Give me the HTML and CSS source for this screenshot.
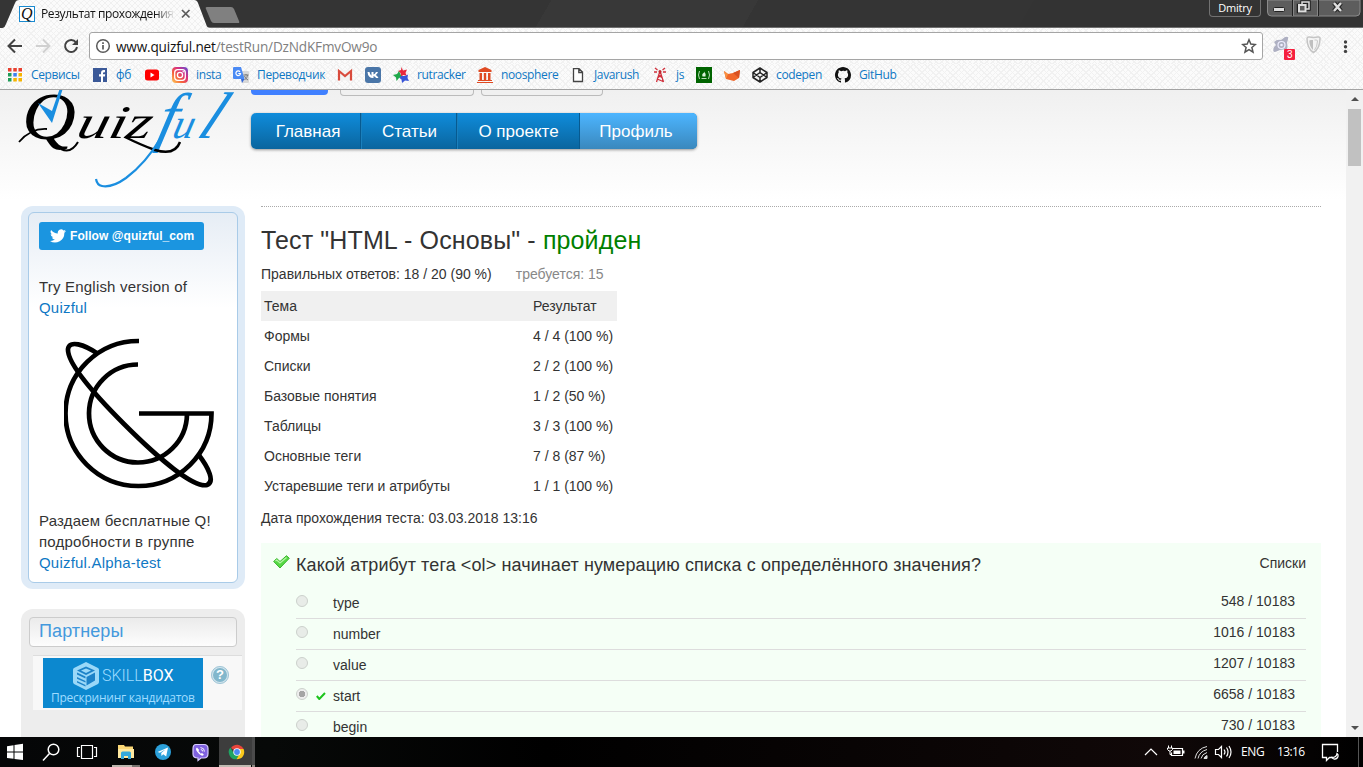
FILE: index.html
```html
<!DOCTYPE html>
<html lang="ru">
<head>
<meta charset="utf-8">
<title>Результат прохождения</title>
<link rel="stylesheet" href="styles.css">
</head>
<body>
<div class="screen">
  <header class="tabstrip">
    <svg class="tabs" width="560" height="28" viewBox="0 0 560 28">
      <defs>
        <pattern id="weave" width="6" height="6" patternUnits="userSpaceOnUse"><rect width="6" height="6" fill="#fbfbfb"/><path d="M0 0l6 6M6 0L0 6" stroke="#f0f0f0" stroke-width="1"/></pattern>
      </defs>
      <path d="M0 0h18L5 26q-1 2-5 2z" fill="#353535"/>
      <path d="M3 28Q5 27 6 24L15 3Q16 0 19 0H194Q197 0 198 3L206 24Q207 28 210 28z" fill="url(#weave)"/>
      <path d="M206 9q-1-2 1-2h24q2 0 3 2l5 12q1 2-1 2h-24q-2 0-3-2z" fill="#808080"/>
      <rect x="19.500" y="6.500" width="15" height="15" fill="#fff" stroke="#1a8ad0"/>
      <text x="21" y="19" class="fav-q">Q</text>
      <path d="M182 10l7.500 7.500M189.500 10L182 17.500" stroke="#5a5a5a" stroke-width="1.700"/>
    </svg>
    <span class="tab-title">Результат прохождения</span>
    <span class="user">Dmitry</span>
    <svg class="winbtns" width="94" height="17" viewBox="0 0 94 17">
      <path d="M.5 0V12q0 4 4 4H89q4 0 4-4V0z" fill="#5d5d5d" stroke="#8b8b8b"/>
      <path d="M25.500 0V16M51.500 0V16" stroke="#222"/><path d="M26.500 0V16M50.500 0V16" stroke="#858585"/>
      <rect x="6.500" y="7.500" width="11" height="4" rx="1" fill="#ddd" stroke="#222"/>
      <path d="M35 2h7v7h-7zM31.500 5.500h6v6h-6z" fill="#5d5d5d" stroke="#1e1e1e" stroke-width="3.500"/><path d="M35 2h7v7h-7z" fill="none" stroke="#ddd" stroke-width="1.500"/><path d="M32 5h6.500v6.500H32z" fill="#5d5d5d" stroke="#ddd" stroke-width="2"/>
      <path d="M67 3l7 8M74 3l-7 8" stroke="#222" stroke-width="4.500"/><path d="M67 3l7 8M74 3l-7 8" stroke="#ddd" stroke-width="2.500"/>
    </svg>
  </header>

  <div class="toolbar">
    <svg class="navicons" width="82" height="28" viewBox="0 0 82 28" fill="none">
      <path d="M22 14H9M15 7.500L8.500 14l6.500 6.500" stroke="#424242" stroke-width="2"/>
      <path d="M36 14h13M43 7.500l6.500 6.500L43 20.500" stroke="#d0d0d0" stroke-width="2"/>
      <path d="M76 10.500A6 6 0 1 0 77 15" stroke="#424242" stroke-width="2"/><path d="M78 7v6h-6z" fill="#424242"/>
    </svg>
    <div class="omnibox">
      <svg width="16" height="16" viewBox="0 0 16 16"><circle cx="8" cy="8" r="6.300" fill="none" stroke="#5a5a5a" stroke-width="1.500"/><path d="M8 7v4.500M8 4.300V6" stroke="#5a5a5a" stroke-width="1.700"/></svg>
      <span class="url">www.quizful.net<i>/testRun/DzNdKFmvOw9o</i></span>
      <svg class="star" width="16" height="16" viewBox="0 0 16 16"><path d="M8 1.800l1.800 4.300 4.600.4-3.500 3 1.100 4.600-4-2.500-4 2.500 1.100-4.600-3.500-3 4.600-.4z" fill="none" stroke="#555" stroke-width="1.500"/></svg>
    </div>
    <svg class="exts" width="92" height="28" viewBox="0 0 92 28">
      <path d="M3 10q3-3 7-2l4-3q4-1 3 2l-1 4q1 4 0 6l-7 1-5 2q-3 0-1-5l2-2z" fill="#aeb0c2"/><circle cx="10.500" cy="13" r="3.500" fill="none" stroke="#eef" stroke-width="1.200"/><circle cx="10.500" cy="13" r="1.300" fill="#eef"/>
      <rect x="13" y="17" width="11" height="11" rx="1" fill="#f5203f"/><text x="16" y="26" class="badge">3</text>
      <path d="M36 6.500Q36 4 42.500 5.500q7-1.500 6.500 1 0 10-6.500 14-6.500-4-6.500-14z" fill="#f4f4f4" stroke="#c4c4c4" stroke-width="1.500"/><path d="M42 8q-4-.5-3.700 1 .3 6 3.700 9z" fill="#bfbfbf"/><path d="M43.500 8q3-.5 3 1-.3 6-3 9" fill="none" stroke="#c8c8c8"/>
      <circle cx="74.500" cy="10" r="1.700" fill="#424242"/><circle cx="74.500" cy="14.700" r="1.700" fill="#424242"/><circle cx="74.500" cy="19.400" r="1.700" fill="#424242"/>
    </svg>
  </div>

  <nav class="bookmarks">
    <a class="bm b1"><svg viewBox="0 0 16 16"><g fill="#e8402f"><path d="M1 1h3.500v3.500H1zM6.300 1h3.500v3.500H6.300zM11.500 1H15v3.500h-3.500z"/></g><path d="M1 6h3.500v3.500H1z" fill="#1f9c58"/><path d="M6.300 6h3.500v3.500H6.300z" fill="#3c80f0"/><path d="M11.500 6H15v3.500h-3.500zM11.500 11H15v3.500h-3.500zM6.300 11h3.500v3.500H6.300z" fill="#f5b400"/><path d="M1 11h3.500v3.500H1z" fill="#1f9c58"/></svg><span>Сервисы</span></a>
    <a class="bm b2"><svg viewBox="0 0 16 16"><path d="M1 1h14v14H1z" fill="#3b5998"/><path d="M9 15V9.500H7V7.300h2V6q0-3 2.800-3H13v2.200h-1q-1 0-1 1v1.100h2.200l-.3 2.200H11V15z" fill="#fff"/></svg><span>фб</span></a>
    <a class="bm b3"><svg viewBox="0 0 16 16"><rect x="1" y="2.500" width="14" height="11" rx="2.500" fill="#f00"/><path d="M6.500 5.500l4 2.500-4 2.500z" fill="#fff"/></svg></a>
    <a class="bm b4"><svg viewBox="0 0 16 16"><defs><linearGradient id="ig" x1="0" y1="1" x2="1" y2="0"><stop offset="0" stop-color="#fc5"/><stop offset=".35" stop-color="#f5603d"/><stop offset=".65" stop-color="#d62e80"/><stop offset="1" stop-color="#5851db"/></linearGradient></defs><rect width="16" height="16" rx="4" fill="url(#ig)"/><rect x="2.700" y="2.700" width="10.600" height="10.600" rx="3" fill="none" stroke="#fff" stroke-width="1.300"/><circle cx="8" cy="8" r="2.600" fill="none" stroke="#fff" stroke-width="1.300"/><circle cx="11.200" cy="4.800" r=".8" fill="#fff"/></svg><span>insta</span></a>
    <a class="bm b5"><svg viewBox="0 0 16 16"><path d="M7 4h8q1 0 1 1v10q0 1-1 1H9z" fill="#d8d8d8"/><path d="M1 0h7l3.500 12H1q-1 0-1-1V1q0-1 1-1z" fill="#4a8af4"/><path d="M8 12h3.500L9 16z" fill="#3367d6"/><path d="M7 4.800a2.300 2.300 0 1 0 .5 1.700H5.300" fill="none" stroke="#fff" stroke-width="1.200"/><path d="M10.500 8h5M13 7v1M11.500 13q3-2 3-5M11.500 9q1 3 3.500 4" fill="none" stroke="#777"/></svg><span>Переводчик</span></a>
    <a class="bm b6"><svg viewBox="0 0 16 16"><path d="M1 3h14v10.500H1z" fill="#f3f3f3"/><path d="M2 13.500V4l6 5 6-5v9.500" fill="none" stroke="#d94b3d" stroke-width="2.200"/></svg></a>
    <a class="bm b7"><svg viewBox="0 0 16 16"><rect width="16" height="16" rx="3" fill="#4a76a8"/><path d="M2.500 5h2q.5 3 2 3.800V5h2v2.500Q10 7 11 5h2q-.4 1.700-2.200 3.100Q12.500 9.200 13.500 11h-2.300Q10 9.400 8.500 9v2H8Q3 11 2.500 5z" fill="#fff"/></svg></a>
    <a class="bm b8"><svg viewBox="0 0 16 16"><path d="M8.500 0l1.500 3.500 4-1-1.500 3.500 1.500 3-3.500-1L8 9.500 7.500 6 5 4l3-1z" fill="#e8283c"/><path d="M0 8l4-1 2-3 1.500 3.500L9 10l-3 1-2.500 3L3 10.500z" fill="#20a84a"/><path d="M8 9l4 0 3-1.500-.5 3.500 1.500 3-4-.5-3 2.500-.5-3.500L6.500 11z" fill="#3855d8"/></svg><span>rutracker</span></a>
    <a class="bm b9"><svg viewBox="0 0 16 16"><path d="M8 0l6.500 3v2h-13V3zM2.500 6H5v7H2.500zM6.800 6h2.400v7H6.800zM11 6h2.500v7H11zM1 13h14v1H1zM0 15h16v1H0z" fill="#e04a22"/></svg><span>noosphere</span></a>
    <a class="bm b10"><svg viewBox="0 0 16 16"><path d="M3.500 1.700h5.500L12.500 5v9.500h-9zM8.800 1.700V5.500h3.700" fill="#fff" stroke="#444" stroke-width="1.300"/></svg><span>Javarush</span></a>
    <a class="bm b11"><svg viewBox="0 0 16 16"><path d="M8 4L4.500 15M8 4l3.500 11M6.500 8l4 3M9.500 8l-4 3M5.300 12l5.700 2.500M3 1l2.500 2M13 1l-2.500 2M2 5h3M11 5h3" fill="none" stroke="#d0303c" stroke-width="1.300"/><circle cx="8" cy="4.500" r="1.500" fill="#c1272d"/></svg><span>js</span></a>
    <a class="bm b12"><svg viewBox="0 0 16 16"><path d="M0 0h16v16H0z" fill="#006400"/><path d="M3.500 4q-2 4 0 8M12.500 4q2 4 0 8M5.500 11.500h5" fill="none" stroke="#b8dcb8"/><path d="M8 4.500q2.500 2.500 1.500 5H6.500q-1-2 .7-3.500.8 1 .8-1.500z" fill="#d8f0d8"/></svg></a>
    <a class="bm b13"><svg viewBox="0 0 16 16"><path d="M0 4l4 3 5-1 7-3-1 8-5 3-8-2z" fill="#f0672a"/><path d="M0 4l4 3-2 5z" fill="#f89040"/><path d="M16 3L9 6l6 5z" fill="#d85020"/></svg></a>
    <a class="bm b14"><svg viewBox="0 0 16 16"><path d="M8 1l7 4.500v5L8 15l-7-4.500v-5zM8 1v4.500M8 10.500V15M1 5.500l7 5 7-5M1 10.500l7-5 7 5" fill="none" stroke="#222" stroke-width="1.500" stroke-linejoin="round"/></svg><span>codepen</span></a>
    <a class="bm b15"><svg viewBox="0 0 16 16"><path d="M8 0C3.580 0 0 3.580 0 8c0 3.540 2.290 6.530 5.470 7.590.4.070.55-.17.55-.38 0-.19-.01-.82-.01-1.490-2.010.37-2.530-.49-2.690-.94-.09-.23-.48-.94-.82-1.130-.28-.15-.68-.52-.01-.53.63-.01 1.080.58 1.230.82.72 1.210 1.870.87 2.330.66.070-.52.28-.87.51-1.070-1.780-.2-3.640-.89-3.640-3.950 0-.87.31-1.590.82-2.150-.08-.2-.36-1.020.08-2.120 0 0 .67-.21 2.200.82A7.700 7.700 0 0 1 8 3.860c.68 0 1.360.09 2 .27 1.530-1.040 2.200-.82 2.200-.82.44 1.100.16 1.920.08 2.120.51.56.82 1.270.82 2.150 0 3.070-1.870 3.750-3.650 3.950.29.25.54.73.54 1.480 0 1.070-.01 1.930-.01 2.200 0 .21.15.46.55.38A8 8 0 0 0 16 8c0-4.420-3.580-8-8-8z" fill="#111"/></svg><span>GitHub</span></a>
  </nav>

  <div class="viewport">
    <div class="page">
      <aside class="side">
        <svg class="logo" width="224" height="116" viewBox="0 90 224 116">
          <g class="script">
            <text transform="translate(1 139)" font-size="68" textLength="54" lengthAdjust="spacingAndGlyphs">Q</text>
            <text transform="translate(54 138) skewX(-14)" font-size="47" textLength="74" lengthAdjust="spacingAndGlyphs">uiz</text>
            <g fill="#1a8ee0">
              <text transform="translate(134 139) skewX(-14)" font-size="66">f</text>
              <text transform="translate(150 138) skewX(-14)" font-size="42">u</text>
              <text transform="translate(174 138) skewX(-26)" font-size="66">l</text>
            </g>
          </g>
          <path d="M-2 142q12-14 28-13" fill="none" stroke="#000" stroke-width="1.800"/>
          <path d="M40 149q10 5 17-7" fill="none" stroke="#000" stroke-width="2"/>
          <path d="M104 137q16 8 30 13 20 6 25-8" fill="none" stroke="#000" stroke-width="2.500"/>
          <path d="M17 103l14 8L39 88h3L31 123z" fill="#1a8ee0"/>
          <path d="M139 139q-14 24-34 39-14 10-24 8-5-1-6-7" fill="none" stroke="#1a8ee0" stroke-width="2.200"/>
        </svg>
        <section class="card blue">
          <div class="inner">
            <a class="follow"><svg width="16" height="14" viewBox="0 0 24 20"><path d="M24 2.400a9.800 9.800 0 0 1-2.800.8A4.900 4.900 0 0 0 23.300.5a9.900 9.900 0 0 1-3.100 1.200 4.900 4.900 0 0 0-8.400 4.500A14 14 0 0 1 1.700 1a4.900 4.900 0 0 0 1.500 6.600A4.900 4.900 0 0 1 1 7v.1a4.900 4.900 0 0 0 3.900 4.800 4.900 4.900 0 0 1-2.200.1 4.900 4.900 0 0 0 4.600 3.400A9.900 9.900 0 0 1 0 17.500a14 14 0 0 0 21.500-12.400A10 10 0 0 0 24 2.400z" fill="#fff"/></svg><span>Follow @quizful_com</span></a>
            <p class="en">Try English version of<br><a>Quizful</a></p>
            <svg class="glogo" width="152" height="152" viewBox="0 0 152 152" fill="none" stroke="#000" stroke-width="4.700">
              <path d="M75 3A73 72.500 0 1 0 147.500 75.500H75"/>
              <path d="M74 26.500A49 49 0 1 0 123 76"/>
              <path d="M34 16C20 6 5 2 4 11 3 26 35 61 60 86 95 121 130 150 143 147 151 144 145 130 134 116"/>
            </svg>
            <p class="ru">Раздаем бесплатные Q!<br>подробности в группе<br><a>Quizful.Alpha-test</a></p>
          </div>
        </section>
        <section class="card gray">
          <h2>Партнеры</h2>
          <div class="partner">
            <div class="banner">
              <div class="sb"><svg width="26" height="28" viewBox="0 0 26 28"><path d="M13 0l12 6q1 .5 1 2v12q0 1-1 2l-12 6-12-6q-1-1-1-2V8q0-1.500 1-2z" fill="#9ad8f8"/><path d="M13 4.500l9 4-9 4.500-9-4.500zM4 10.500l8.500 4v2L4 12.500zM4 15l8.500 4v1.500L4 16.700zM4 19l8.500 4v1.500L4 20.500zM22 10.500v8l-8.500 5v-8.500z" fill="#1c82c8"/><path d="M13 6.500l5 2-5 2.500-5-2.500z" fill="#9ad8f8"/></svg><span class="brand">SKILL<b>BOX</b></span></div>
              <span class="pres">Прескрининг кандидатов</span>
            </div>
            <span class="help">?</span>
          </div>
        </section>
      </aside>
      <main class="main">
        <div class="stubs"><i class="s1"></i><i class="s2"></i><i class="s3"></i></div>
        <nav class="menu"><a class="m1">Главная</a><a class="m2">Статьи</a><a class="m3">О проекте</a><a class="m4">Профиль</a></nav>
        <div class="content">
          <h1>Тест "HTML - Основы" - <b>пройден</b></h1>
          <p class="score">Правильных ответов: 18 / 20 (90 %)<span class="need">требуется: 15</span></p>
          <table class="topics">
            <tr class="th"><td>Тема</td><td>Результат</td></tr>
            <tr><td>Формы</td><td>4 / 4 (100 %)</td></tr>
            <tr><td>Списки</td><td>2 / 2 (100 %)</td></tr>
            <tr><td>Базовые понятия</td><td>1 / 2 (50 %)</td></tr>
            <tr><td>Таблицы</td><td>3 / 3 (100 %)</td></tr>
            <tr><td>Основные теги</td><td>7 / 8 (87 %)</td></tr>
            <tr><td>Устаревшие теги и атрибуты</td><td>1 / 1 (100 %)</td></tr>
          </table>
          <p class="date">Дата прохождения теста: 03.03.2018 13:16</p>
          <section class="question">
            <div class="qhead">
              <svg width="17" height="14" viewBox="0 0 17 14"><path d="M.7 6.500l3-3L7 6.500 13.500.7l2.800 2.600L7 13z" fill="#56d845" stroke="#39b52c"/><path d="M2.500 6l1.300-1L7 8l6.500-5.500" fill="none" stroke="#b5f5a5" stroke-width="1.300"/></svg>
              <h3>Какой атрибут тега &lt;ol&gt; начинает нумерацию списка с определённого значения?</h3>
              <span class="topic">Списки</span>
            </div>
            <ul>
              <li><i class="radio"></i><span class="ans">type</span><span class="n">548 / 10183</span></li>
              <li><i class="radio"></i><span class="ans">number</span><span class="n">1016 / 10183</span></li>
              <li><i class="radio"></i><span class="ans">value</span><span class="n">1207 / 10183</span></li>
              <li><i class="radio on"></i><svg class="tick" width="10" height="8" viewBox="0 0 10 8"><path d="M.8 4l2.500 3L9 1" fill="none" stroke="#1cc41c" stroke-width="2"/></svg><span class="ans">start</span><span class="n">6658 / 10183</span></li>
              <li><i class="radio"></i><span class="ans">begin</span><span class="n">730 / 10183</span></li>
            </ul>
          </section>
        </div>
      </main>
    </div>
    <div class="scrollbar"><i class="up"></i><i class="thumb"></i><i class="down"></i></div>
  </div>

  <footer class="taskbar">
    <svg width="36" height="30" viewBox="0 0 36 30"><path d="M7 9.200l6.500-1v6.300H7zM14.500 8L23 6.800v7.700h-8.500zM7 15.500h6.500v6.300L7 21zM14.500 15.500H23V23l-8.500-1z" fill="#fff"/></svg>
    <svg width="36" height="30" viewBox="36 0 36 30"><circle cx="53.500" cy="12.500" r="5.300" fill="none" stroke="#fff" stroke-width="1.500"/><path d="M49.500 16.500L43 23.500" stroke="#fff" stroke-width="1.500"/></svg>
    <svg width="40" height="30" viewBox="72 0 40 30"><path d="M81.500 8.500h11v13h-11zM80 10.500h-2.500v9H80M94 10.500h2.500v9H94" fill="none" stroke="#fff" stroke-width="1.200"/></svg>
    <svg width="36" height="30" viewBox="112 0 36 30"><path d="M118 8h6l1 1.500h8V14h1v7h-16z" fill="#fbd876"/><path d="M118 12h16v9h-16z" fill="#ffe9a0"/><path d="M121 22v-6q0-1.500 1.500-1.500h7Q131 14.500 131 16v6h-3v-3h-4v3z" fill="#35aadc"/><path d="M112 28h20v2h-20z" fill="#bbb6ad"/><path d="M132 28h8v2h-8z" fill="#77736e"/></svg>
    <svg width="36" height="30" viewBox="148 0 36 30"><circle cx="163" cy="15" r="8" fill="#2ba0da"/><path d="M157.500 15l10.500-4.500-1.800 9-3-2.200-1.700 1.700-.3-3 4.500-3.800-5.800 3.500z" fill="#fff"/></svg>
    <svg width="35" height="30" viewBox="184 0 35 30"><path d="M196 7.500h8q4 0 4 4v5q0 4.500-4 4.500h-3l-3 2.500V21q-5 0-5-4v-5q0-4.500 3-4.500z" fill="#8062e0" stroke="#d8ccff" stroke-width="1.200"/><path d="M197 10.500q-2 1 0 4t4.500 4q2 .5 2.300-1l-1.800-1.500-1.200.8-2.300-2.500.6-1.300z" fill="#fff"/><path d="M200.500 10.500q4 .5 4 4M200.800 12.500q2 .3 2 2" fill="none" stroke="#fff" stroke-width=".9"/></svg>
    <svg width="36" height="30" viewBox="219 0 36 30"><path d="M219 0h33v28h-33z" fill="#3d3d3d"/><path d="M252 0h3v28h-3z" fill="#4b4b4b"/><path d="M219 28h32v2h-32z" fill="#c0bbb2"/><path d="M252 28h3v2h-3z" fill="#8c8881"/><path d="M237 15L231 11A7.300 7.300 0 0 1 243.600 12z" fill="#e8453c"/><path d="M237 15h-4l-2.700-4.500A7.300 7.300 0 0 0 236.500 22.300L240 17z" fill="#1fa463"/><path d="M237 12h6.600A7.300 7.300 0 0 1 236.500 22.300L240 16z" fill="#fbc91b"/><circle cx="237" cy="15" r="3.700" fill="#fff"/><circle cx="237" cy="15" r="2.900" fill="#4a8af4"/></svg>
    <svg class="tray" width="98" height="30" viewBox="1140 0 98 30" fill="none" stroke="#fff" stroke-width="1.200"><path d="M1145 18l6-6 6 6"/><path d="M1173 11.500h9.500v7h-11v-3"/><path d="M1173.500 13.500h7v3.500h-7zM1183 13.500h1.500v3h-1.500z" fill="#fff" stroke="none"/><path d="M1168.500 8.500v2.500M1171.500 8.500v2.500M1167.500 11h5v1.500l-1.500 1.500h-2l-1.500-1.500zM1170 14v3.500h2" stroke-width="1"/><g stroke="#ddd" stroke-width="1"><path d="M1195 21.500q2-10 12-12M1198 21.500q1.500-7 9-9M1201 21.500q1-4.500 6-6"/><path d="M1204 21.500q.5-2 3-3v3z" fill="#ddd"/></g><path d="M1215.500 12.500h3l3-3v11l-3-3h-3zM1224 12.500q2 2.500 0 5M1226.500 10.500q3 4.500 0 9M1229 9q4 6 0 12"/></svg>
    <span class="lang">ENG</span>
    <span class="clock">13:16</span>
    <svg class="notif" width="45" height="30" viewBox="1318 0 45 30"><path d="M1337.500 15V7.500h-15v13h4v3l3-3h3" fill="none" stroke="#fff" stroke-width="1.300"/><path d="M1337 16.500q1.500 1 1 3-1 3-4 2.500-1.500-.5-2-1.500 4.500 0 5-4z" fill="none" stroke="#fff" stroke-width="1.300"/><path d="M1358.500 0v30" stroke="#555"/></svg>
  </footer>
</div>
</body>
</html>
```
FILE: styles.css
```css
*{box-sizing:border-box}
body{margin:0;width:1363px;height:767px;overflow:hidden;font-family:"Liberation Sans",Arial,sans-serif;color:#333}
h1,h2,h3,p,ul{margin:0;padding:0;font-weight:400}
svg{display:block;flex:none}
a{color:#0f78c4}
.screen{display:flex;flex-direction:column;height:767px}
.tabstrip{height:28px;flex:none;display:flex;align-items:flex-start;background:linear-gradient(120deg,#343434 0 40%,#383838 40% 55%,#343434 55% 75%,#333 75%);border-bottom:1px solid #6f6f6f;font-family:"Open Sans",sans-serif;font-size:12px}
.tabs{margin-right:-560px}
.fav-q{font:italic 16px "Liberation Serif",serif;fill:#111}
.tab-title{position:relative;margin-left:41px;width:134px;line-height:28px;letter-spacing:-.38px;white-space:nowrap;color:#111;-webkit-mask-image:linear-gradient(90deg,#000 85%,transparent)}
.user{margin-left:1034px;width:52px;height:17px;border:1px solid #727272;border-top:0;border-radius:0 0 4px 4px;color:#fff;font-size:11px;letter-spacing:-.2px;line-height:15px;text-align:center}
.winbtns{margin-left:6px}
.toolbar,.bookmarks{background-color:#fbfbfb;background-image:repeating-linear-gradient(45deg,transparent 0 3px,#f1f1f1 3px 4px),repeating-linear-gradient(-45deg,transparent 0 3px,#f1f1f1 3px 4px)}
.toolbar{height:36px;flex:none;display:flex;align-items:flex-start;padding-top:4px}
.omnibox{margin-left:7px;width:1174px;height:28px;background:#fff;border:1px solid #a5a5a5;border-radius:3px;display:flex;align-items:center;padding:0 5px;font-family:"Open Sans",sans-serif;font-size:13.600px;letter-spacing:-.18px;color:#111}
.url{margin-left:5px}
.url i{font-style:normal;color:#808080}
.star{margin-left:auto}
.exts{margin-left:8px}
.badge{font:10px "Liberation Sans",sans-serif;fill:#fff}
.bookmarks{height:26px;flex:none;display:flex;align-items:center;padding:0 0 4px 7px;border-bottom:1px solid #a3a3a3;font-family:"Open Sans",sans-serif;font-size:12px;letter-spacing:-.36px}
.bm{display:flex;align-items:center;gap:8px;flex:none;white-space:nowrap}
.bm svg{width:16px;height:16px}
.b1{width:85px}.b2{width:52px}.b3{width:28px}.b4{width:61px}.b5{width:104px}.b6,.b7{width:28px}.b8{width:84px}.b9{width:93px}.b10{width:82px}.b11{width:44px}.b12,.b13{width:28px}.b14{width:83px}
.viewport{flex:1;min-height:0;display:flex;background:linear-gradient(#f0f0f0,#fff 110px)}
.page{flex:1;display:flex;overflow:hidden;padding-left:21px}
.side{width:224px;flex:none}
.logo{overflow:visible}
.script{font-family:"Liberation Serif",serif;font-style:italic}
.card{border-radius:12px}
.blue{background:#dfebf7;height:383px;padding:6px 7px}
.inner{height:371px;border:1px solid #a9cbe8;border-radius:6px;background:linear-gradient(#e6edf5,#fff 95px);padding:9px 10px}
.follow{display:flex;align-items:center;gap:4px;width:165px;height:28px;padding-left:11px;border-radius:3px;background:#1b95e0;color:#fff;font-size:12px;letter-spacing:.06px;font-weight:700;white-space:nowrap}
.en,.ru{font-size:15px;letter-spacing:.2px;line-height:21px;white-space:nowrap}
.en{margin-top:26px}
.glogo{margin:20px 0 0 25px}
.ru{margin-top:20px}
.gray{margin-top:20px;height:140px;background:#ededed;padding:8px 3px 0 8px}
.gray h2{width:208px;height:30px;border:1px solid #ccc;border-radius:4px;background:linear-gradient(#ebebeb,#fdfdfd);padding-left:9px;font-size:18px;letter-spacing:.1px;line-height:27px;color:#4499dd}
.partner{margin:8px 0 0 4px;width:209px;height:55px;border-top:1px solid #ddd;background:#f8f8f8;display:flex;padding:2px 0 0 10px}
.banner{width:160px;height:50px;background:#0c88cf;color:#9fdcff}
.sb{display:flex;align-items:center;gap:3px;height:32px;padding:4px 0 0 30px}
.brand{font:300 16px/28px "Roboto",sans-serif}
.brand b{font-weight:400;color:#fff}
.pres{display:block;padding-left:8px;font:12px/15px "Open Sans",sans-serif;letter-spacing:-.25px;white-space:nowrap}
.help{margin:8px 0 0 8px;width:18px;height:18px;border-radius:50%;border:2px solid #d5e6ee;outline:1px solid #9fc5d6;outline-offset:-1px;background:#82b7cc;color:#fff;font-size:13px;font-weight:700;line-height:14px;text-align:center}
.main{flex:1;padding-right:25px}
.stubs{display:flex;height:23px;padding-left:6px;align-items:flex-start}
.stubs i{height:6px;border:1px solid #bbb;border-top:0;border-radius:0 0 4px 4px;background:#f0f0f0}
.stubs .s1{width:77px;height:5px;background:#4080ff;border:0}
.stubs .s2{width:134px;margin-left:12px}
.stubs .s3{width:122px;margin-left:7px}
.menu{margin-left:6px;width:446px;height:36px;display:flex;border-radius:5px;overflow:hidden;box-shadow:0 1px 3px #0006;background:linear-gradient(#0f8cdb,#0a659e);font-size:17px;line-height:37px}
.menu a{color:#fff;text-align:center;border-right:1px solid #075a90}
.m1{width:110px;padding-left:5px}.m2{width:96px;padding-left:1px;border-left:1px solid #1a80bd}.m3{width:123px;border-left:1px solid #1a80bd}
.menu .m4{width:117px;padding-right:5px;border-right:0;background:linear-gradient(#4cb5ff,#3a88bd)}
.content{margin:57px 0 0 16px;border-top:1px dotted #aaa}
h1{margin-top:16px;font-size:25px;letter-spacing:.13px;line-height:34px}
h1 b{font-weight:400;color:green}
.score{margin-top:5px;height:29px;font-size:14px;line-height:25px}
.need{margin-left:24px;color:#888}
.topics{width:356px;border-collapse:collapse;font-size:14px}
.topics tr{height:30px}
.topics td{padding:0 3px;white-space:nowrap}
.topics td:first-child{width:269px}
.th{background:#f0f0f0}
.date{margin-top:5px;font-size:14px;line-height:24px}
.question{margin-top:13px;background:#f5fff6;height:220px;padding:0 15px 0 12px}
.qhead{display:flex;height:45px}
.qhead svg{margin-top:12px}
h3{margin-left:6px;font-size:18px;letter-spacing:.1px;line-height:45px}
.topic{margin-left:auto;font-size:14px;line-height:40px}
ul{margin-left:23px;list-style:none;font-size:14px}
li{height:31px;border-bottom:1px solid #ddd;display:flex;align-items:flex-start;line-height:30px}
.radio{width:12px;height:12px;margin-top:7px;border:1px solid #ccd1cc;border-radius:50%;background:#e8ece8}
.on{background:radial-gradient(circle,#a5a5a5 0 3px,#eee 3.5px)}
.tick{margin:11px -18px 0 8px}
.ans{margin-left:25px}
.n{margin-left:auto;padding-right:11px;line-height:27px}
.scrollbar{width:17px;background:#f1f1f1;display:flex;flex-direction:column;align-items:center}
.up,.down{border:4px solid transparent}
.up{border-bottom-color:#505050;margin-top:3px}
.thumb{margin-top:8px;width:13px;height:57px;background:#c1c1c1}
.down{border-top-color:#505050;margin-top:auto;margin-bottom:3px}
.taskbar{height:30px;flex:none;display:flex;background:linear-gradient(90deg,#050607,#070908 20%,#000 40%,#100808 85%,#000);font-family:"Open Sans",sans-serif;font-size:12px;line-height:29px;color:#fff}
.tray{margin-left:885px}
.lang{width:39px;padding-left:3px;letter-spacing:-.4px}
.clock{width:41px;letter-spacing:-.6px}
```
